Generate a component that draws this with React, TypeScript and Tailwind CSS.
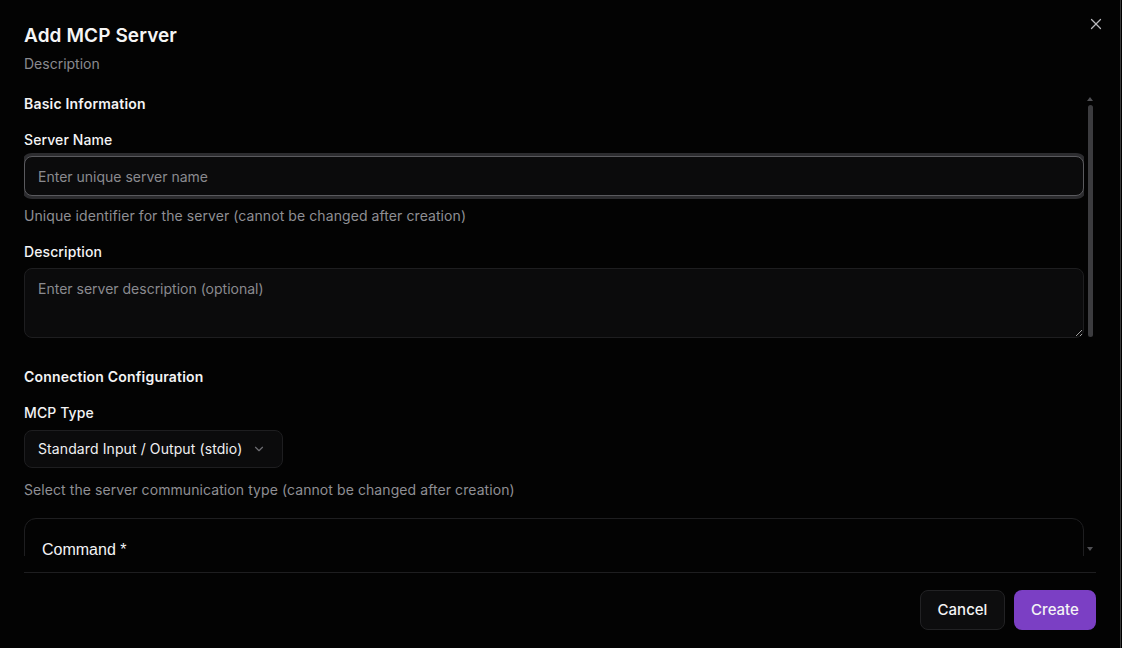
import { ChevronDown, X } from 'lucide-react';

const font = { fontFamily: 'Inter, "Noto Sans", sans-serif' };

function Label({ children }: { children: React.ReactNode }) {
  return <div className="text-sm font-medium leading-5 tracking-[0.1px] text-[#f4f4f5]">{children}</div>;
}

function Help({ children }: { children: React.ReactNode }) {
  return <p className="text-sm leading-5 tracking-[0.08px] text-[#8f8f94]">{children}</p>;
}

// drawn scrollbar, the headless browser hides native ones
function ScrollBar() {
  return (
    <div className="flex w-3 flex-col items-center pt-[5px] pb-[5px]">
      <div className="h-0 w-0 border-x-[3.5px] border-b-[4px] border-x-transparent border-b-[#505054]" />
      <div className="mt-[4px] h-[232px] w-[5px] rounded-full bg-[#3c3c3f]" />
      <div className="flex-1" />
      <div className="h-0 w-0 border-x-[3.5px] border-t-[4px] border-x-transparent border-t-[#505054]" />
    </div>
  );
}

export default function App() {
  return (
    <div className="h-[648px] w-[1122px] overflow-hidden bg-black" style={font}>
      <div className="relative flex h-full w-[1121px] flex-col border-r border-[#3a3a3a] bg-[#030303] px-6 pt-[22px] text-white">
        <button className="absolute right-[15px] top-[15px] text-[#b8b8bc]">
          <X size={18} strokeWidth={1.75} />
        </button>

        {/* header */}
        <div className="flex flex-col gap-[4px]">
          <h2 className="text-[19px] font-semibold leading-7 tracking-[0.1px] text-[#f5f5f5]">Add MCP Server</h2>
          <p className="text-sm leading-5 text-[#8a8a8f]">Description</p>
        </div>

        {/* scrollable body */}
        <div className="mt-[18px] flex h-[464px]">
          <div className="flex-1 overflow-hidden">
            <div className="pt-[2px]">
              <h3 className="text-sm font-semibold leading-5 tracking-[0.2px] text-[#f4f4f5]">Basic Information</h3>

              <div className="mt-4">
                <Label>Server Name</Label>
                <input
                  placeholder="Enter unique server name"
                  className="mt-[6px] h-10 w-full rounded-lg border border-[#5a5a5e] bg-[#0b0b0c] px-[13px] text-sm text-white ring-[3px] ring-[#2c2c2f] outline-none placeholder:text-[#8a8a8f]"
                />
                <div className="mt-[10px]">
                  <Help>Unique identifier for the server (cannot be changed after creation)</Help>
                </div>
              </div>

              <div className="mt-4">
                <Label>Description</Label>
                <textarea
                  placeholder="Enter server description (optional)"
                  className="mt-[6px] block h-[70px] w-full resize-y rounded-lg border border-[#1e1e20] bg-[#0b0b0c] px-[13px] py-[10px] text-sm text-white outline-none [color-scheme:dark] placeholder:text-[#8a8a8f]"
                />
              </div>

              <h3 className="mt-[29px] text-sm font-semibold leading-5 tracking-[0.2px] text-[#f4f4f5]">
                Connection Configuration
              </h3>

              <div className="mt-4">
                <Label>MCP Type</Label>
                <button className="mt-[7px] flex h-[38px] w-[259px] items-center justify-between rounded-lg border border-[#1e1e20] bg-[#0b0b0c] pl-[13px] pr-[16px] text-sm tracking-[0.1px] text-[#f0f0f2]">
                  <span>Standard Input / Output (stdio)</span>
                  <ChevronDown size={14} className="text-[#6e6e73]" />
                </button>
                <div className="mt-3">
                  <Help>Select the server communication type (cannot be changed after creation)</Help>
                </div>
              </div>

              <div className="mt-[18px] h-[80px] rounded-xl border border-[#1e1e20] px-[17px] pt-[21px]">
                <div
                  className="text-base font-medium leading-5 text-[#f4f4f5]"
                  style={{ fontFamily: '"Liberation Sans", Arial, sans-serif' }}
                >
                  Command *
                </div>
              </div>
            </div>
          </div>
          <ScrollBar />
        </div>

        {/* footer */}
        <div className="mt-[16px] flex justify-end gap-[9px] border-t border-[#1e1e20] pt-[17px]">
          <button className="h-10 w-[85px] rounded-lg border border-[#222224] bg-[#0d0d0e] text-[15px] font-medium text-[#f4f4f5]">
            Cancel
          </button>
          <button className="h-10 w-[82px] rounded-lg bg-[#7b3fc4] text-[15px] font-medium text-[#f4f4f5]">
            Create
          </button>
        </div>
      </div>
    </div>
  );
}
